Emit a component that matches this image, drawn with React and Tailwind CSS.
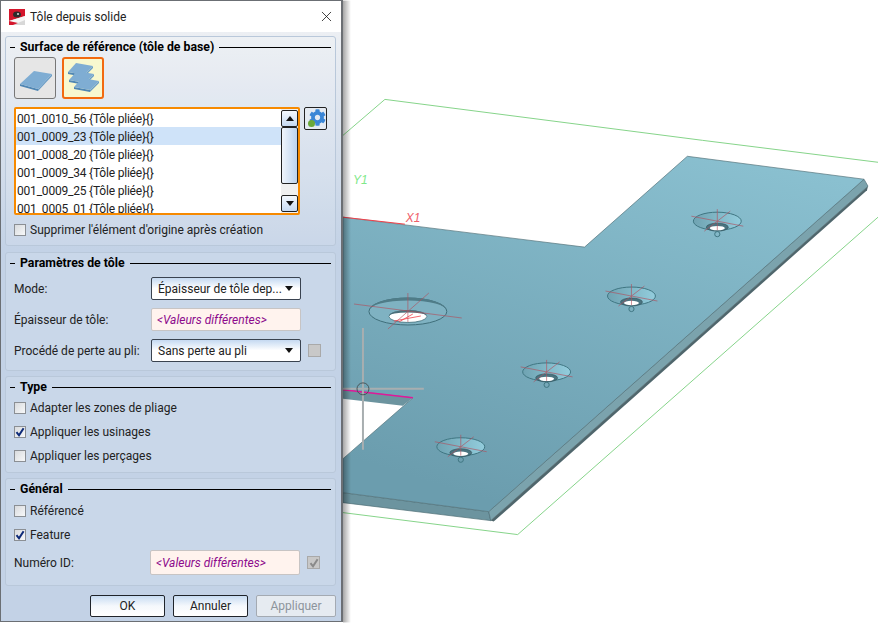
import { X } from "lucide-react";
import { FaCog } from "react-icons/fa";

const font = { fontFamily: 'Roboto, "Open Sans", sans-serif' };

const rows = [
  "001_0010_56 {Tôle pliée}{}",
  "001_0009_23 {Tôle pliée}{}",
  "001_0008_20 {Tôle pliée}{}",
  "001_0009_34 {Tôle pliée}{}",
  "001_0009_25 {Tôle pliée}{}",
  "001_0005_01 {Tôle pliée}{}",
];

const Section = ({ title, className, children }) => (
  <div className={`ml-[4px] mr-[5px] rounded-[3px] border border-[#b9c8da] bg-white/10 px-[8px] ${className}`}>
    <div className="flex items-center gap-[5px] h-[20px] -mx-[4px]">
      <div className="w-[5px] h-px bg-black" />
      <span className="font-bold text-[12.3px] leading-none text-black">{title}</span>
      <div className="flex-1 h-px bg-black" />
    </div>
    {children}
  </div>
);

const Check = ({ on, label, className = "" }) => (
  <div className={`flex items-center gap-[4px] h-[14px] ${className}`}>
    <div className="w-[12px] h-[12px] border border-[#8b8f94] bg-gradient-to-br from-[#d9dbde] to-[#f7f8f9] flex items-center justify-center">
      {on && (
        <svg width="10" height="10" viewBox="0 0 10 10">
          <path d="M1.5 5.2 L4 8.3 L8.6 1.2" fill="none" stroke="#0d2a78" strokeWidth="2" />
        </svg>
      )}
    </div>
    <span className="text-[12px] text-[#222] leading-none">{label}</span>
  </div>
);

const Select = ({ value }) => (
  <div className="w-[150px] h-[23px] shrink-0 rounded-[2px] border border-[#3a4350] bg-gradient-to-b from-[#c5d9f1] via-white to-white flex items-center pl-[6px] pr-[7px] justify-between">
    <span className="text-[12px] text-[#222] leading-none whitespace-nowrap">{value}</span>
    <svg width="8" height="5" viewBox="0 0 8 5"><path d="M0 0 H8 L4 5 Z" fill="#111" /></svg>
  </div>
);

const Diff = ({ className = "h-[23px]" }) => (
  <div className={`w-[150px] shrink-0 rounded-[2px] border border-[#c7c4c4] bg-[#fff3ee] flex items-center pl-[5px] ${className}`}>
    <span className="italic text-[12px] leading-none text-[#8c0a8c]">&lt;Valeurs différentes&gt;</span>
  </div>
);

const PlateShape = ({ dx = 0, dy = 0 }) => (
  <g transform={`translate(${dx} ${dy})`}>
    <path d="M5 16 L21 19 L21 21 L5 18 Z" fill="#4f86b3" />
    <path d="M21 19 L30 10 L30 12 L21 21 Z" fill="#6a9dc6" />
    <path d="M13 7 L30 10 L21 19 L5 16 Z" fill="#7fadd3" />
  </g>
);

const ScrollBtn = ({ up }) => (
  <div className="h-[17px] rounded-[2px] border border-[#222] bg-gradient-to-b from-[#f4f8fd] to-[#c6daf2] flex items-center justify-center">
    <svg width="8" height="5" viewBox="0 0 8 5">
      <path d={up ? "M0 5 H8 L4 0 Z" : "M0 0 H8 L4 5 Z"} fill="#111" />
    </svg>
  </div>
);

const Btn = ({ label, disabled, w }) => (
  <div
    className={`h-[22px] rounded-[2px] border flex items-center justify-center text-[12px] ${w} ${
      disabled
        ? "border-[#a4aab2] text-[#8d949c] bg-[#e6ebf1]"
        : "border-[#20242a] text-[#222] bg-gradient-to-b from-[#c8dcf2] via-[#f5f8fc] to-white"
    }`}
  >
    {label}
  </div>
);

const Hole = ({ cx, cy }) => {
  const rx = 24;
  const ry = 9;
  return (
    <g>
      <ellipse cx={cx} cy={cy} rx={rx} ry={ry} fill="url(#dish)" stroke="#3f7582" strokeWidth="1" />
      <ellipse cx={cx} cy={cy + 6} rx={11} ry={4} fill="#4a7480" stroke="#2f4f58" strokeWidth="0.6" />
      <ellipse cx={cx} cy={cy + 7} rx={7.5} ry={2.2} fill="#fff" />
      <g stroke="#b0505e" strokeWidth="0.8" opacity="0.8">
        <line x1={cx - 26} y1={cy - 5} x2={cx + 26} y2={cy + 5} />
        <line x1={cx} y1={cy - 12} x2={cx} y2={cy + 9} />
        <line x1={cx - 13} y1={cy + 10} x2={cx + 13} y2={cy - 10} />
      </g>
      <circle cx={cx} cy={cy + 13} r="2.6" fill="none" stroke="#3f7582" strokeWidth="1" />
    </g>
  );
};

const Scene = () => (
  <svg className="flex-1 h-[623px] bg-white" viewBox="342 0 536 623">
    <defs>
      <linearGradient id="top" x1="0.8" y1="0" x2="0.35" y2="1">
        <stop offset="0" stopColor="#8ac0d0" />
        <stop offset="1" stopColor="#6b9dae" />
      </linearGradient>
      <linearGradient id="dish" x1="0" y1="0" x2="1" y2="0">
        <stop offset="0" stopColor="#6fa3b2" />
        <stop offset="1" stopColor="#93cddd" />
      </linearGradient>
      <linearGradient id="shadow" x1="0" y1="0" x2="1" y2="0">
        <stop offset="0" stopColor="#000" stopOpacity="0.35" />
        <stop offset="1" stopColor="#000" stopOpacity="0" />
      </linearGradient>
    </defs>
    <path d="M342 135 L384 99 L702 140 L878 162" fill="none" stroke="#86d48a" strokeWidth="1" />
    <path d="M878 217 L517 535 L342 513" fill="none" stroke="#86d48a" strokeWidth="1" />
    <path d="M490 521 L488 512 L342 493 L342 503 Z" fill="#6c949f" stroke="#4c6d75" strokeWidth="0.7" />
    <path d="M488 512 L864 179 L868 186 L490 521 Z" fill="#7ba3ad" stroke="#4f6f77" strokeWidth="0.7" />
    <path d="M490 521 L868 186 L867 190 L493 522 Z" fill="#4f666c" />
    <path
      d="M342 217 L584 247 L687 156 L864 179 L488 512 L342 493 L342 459 L412 398 L342 390 Z"
      fill="url(#top)"
      stroke="#56747c"
      strokeWidth="0.7"
    />
    <path d="M342 390 L412 398 L402 406 L342 399 Z" fill="#6c949f" />
    <path d="M342 390 L412 398" stroke="#e0189a" strokeWidth="1.5" />
    <path d="M342 217 L404 224" stroke="#f0404a" strokeWidth="1" />

    {/* grand trou */}
    <ellipse cx="407" cy="311.5" rx="39" ry="13.5" fill="#7fb2c2" stroke="#3f6e7a" strokeWidth="1" />
    <path d="M368 311 A39 13.5 0 0 1 446 311 A39 10.5 0 0 0 368 311 Z" fill="#4f7c88" />
    <ellipse cx="407" cy="316.5" rx="19" ry="6" fill="#fff" stroke="#3f6e7a" strokeWidth="0.8" />
    <path d="M388 316 A19 6 0 0 1 426 316 A19 3.5 0 0 0 388 316 Z" fill="#4a6f7a" />
    <g stroke="#b0505e" strokeWidth="0.8" opacity="0.8">
      <line x1="353" y1="304" x2="461" y2="318" />
      <line x1="407" y1="293" x2="407" y2="322" />
      <line x1="387" y1="329" x2="428" y2="293" />
    </g>
    <path d="M393 321 L420 316 M398 322 L412 314" stroke="#f0404a" strokeWidth="0.8" />

    <Hole cx={717} cy={221} />
    <Hole cx={631} cy={296} />
    <Hole cx={546} cy={372} />
    <Hole cx={460} cy={447} />
    <g stroke="#a8aeb0" strokeWidth="2">
      <line x1="362" y1="328" x2="362" y2="450" />
      <line x1="342" y1="389" x2="423" y2="389" />
    </g>
    <circle cx="362" cy="389" r="6" fill="none" stroke="#4a5558" strokeWidth="1" />
    <text x="352" y="184" fontSize="12" fontStyle="italic" fill="#7fe88a" style={{ fontFamily: '"Liberation Sans", sans-serif' }}>Y1</text>
    <text x="405" y="222" fontSize="12" fontStyle="italic" fill="#f0606a" style={{ fontFamily: '"Liberation Sans", sans-serif' }}>X1</text>
    <rect x="342" y="0" width="8" height="623" fill="url(#shadow)" />
  </svg>
);

export default function App() {
  return (
    <div className="flex w-[878px] h-[623px] overflow-hidden bg-white" style={font}>
      <div className="w-[343px] h-[622px] shrink-0 border border-[#6b6f74] border-r-2 bg-gradient-to-b from-[#f2f3f5] via-[#c3d2e6] via-40% to-[#c3d2e6] flex flex-col">
        <div className="h-[31px] shrink-0 bg-white flex items-center pl-[8px] pr-[6px] gap-[5px]">
          <svg width="16" height="16" viewBox="0 0 16 16">
            <rect width="16" height="16" fill="#d8d8d8" />
            <path d="M0 0 H16 V7 L0 12 Z" fill="#d4162c" />
            <path d="M0 12 L16 7 V11 L4 16 H0 Z" fill="#f6f6f6" />
            <path d="M0 12 V16 H4 L9 14 Z" fill="#d4162c" />
            <ellipse cx="8" cy="5.5" rx="4" ry="3" fill="#2c2c2c" />
            <circle cx="9" cy="5" r="1" fill="#ddd" />
          </svg>
          <span className="flex-1 text-[12px] text-[#222]">Tôle depuis solide</span>
          <X size={17} strokeWidth={1.1} color="#111" />
        </div>

        <Section title="Surface de référence (tôle de base)" className="mt-[4px] h-[210px]">
          <div className="flex gap-[6px]">
            <div className="w-[42px] h-[42px] rounded-[3px] border border-[#777] bg-[#e6e6e6]">
              <svg width="40" height="40" viewBox="0 0 40 40">
                <path d="M5 26 L23 31 L23 33 L5 28 Z" fill="#4f86b3" />
                <path d="M23 31 L37 16 L37 18 L23 33 Z" fill="#6a9dc6" />
                <path d="M19 13 L37 16 L23 31 L5 26 Z" fill="#7fadd3" />
              </svg>
            </div>
            <div className="w-[42px] h-[42px] rounded-[3px] border-2 border-[#f26a10] bg-[#f8f8cf]">
              <svg width="38" height="38" viewBox="0 0 38 38">
                <PlateShape dx={-1} dy={-3} />
                <PlateShape dx={0} dy={5} />
                <PlateShape dx={5} dy={12} />
              </svg>
            </div>
          </div>
          <div className="flex gap-[4px] mt-[8px]">
            <div className="w-[288px] h-[108px] rounded-[2px] border-2 border-[#f78a00] bg-white flex overflow-hidden">
              <div className="flex-1 overflow-hidden">
                {rows.map((r, i) => (
                  <div
                    key={r}
                    className={`h-[18px] shrink-0 pl-[1px] pt-[2px] flex items-center text-[12px] tracking-[-0.2px] text-[#222] whitespace-nowrap ${i === 1 ? "bg-[#cfe3f9]" : ""}`}
                  >
                    {r}
                  </div>
                ))}
              </div>
              <div className="w-[17px] bg-[#f0f0f0] flex flex-col justify-between py-[1px]">
                <div>
                  <ScrollBtn up />
                  <div className="h-[57px] rounded-[2px] border border-[#222] bg-gradient-to-r from-[#f0f5fb] to-[#bcd3ee]" />
                </div>
                <ScrollBtn />
              </div>
            </div>
            <div className="relative w-[23px] h-[23px] rounded-[2px] border border-[#222] bg-[#e4eaf2] flex items-center justify-center">
              <FaCog size={17} color="#3a86d6" className="ml-[3px] -mt-[2px]" />
              <div className="absolute left-[3px] bottom-[2px] w-[7px] h-[7px] rounded-full bg-[#6aa83a]" />
            </div>
          </div>
          <Check label="Supprimer l'élément d'origine après création" className="mt-[8px]" />
        </Section>

        <Section title="Paramètres de tôle" className="mt-[6px] h-[119px]">
          <div className="flex flex-col gap-[8px] mt-[4px]">
            <div className="flex items-center justify-between text-[12px] text-[#222] pr-[26px]">
              <span>Mode:</span>
              <Select value="Épaisseur de tôle dep..." />
            </div>
            <div className="flex items-center justify-between text-[12px] text-[#222] pr-[26px]">
              <span>Épaisseur de tôle:</span>
              <Diff />
            </div>
            <div className="flex items-center justify-between text-[12px] text-[#222]">
              <span>Procédé de perte au pli:</span>
              <div className="flex items-center gap-[7px] pr-[6px]">
                <Select value="Sans perte au pli" />
                <div className="w-[13px] h-[13px] border border-[#a9a9a9] bg-[#c8c8c8]" />
              </div>
            </div>
          </div>
        </Section>

        <Section title="Type" className="mt-[5px] h-[97px]">
          <div className="flex flex-col gap-[10px] mt-[4px]">
            <Check label="Adapter les zones de pliage" />
            <Check on label="Appliquer les usinages" />
            <Check label="Appliquer les perçages" />
          </div>
        </Section>

        <Section title="Général" className="mt-[5px] h-[108px]">
          <div className="flex flex-col gap-[10px] mt-[5px]">
            <Check label="Référencé" />
            <Check on label="Feature" />
          </div>
          <div className="flex items-center justify-between text-[12px] text-[#222] mt-[8px] pr-[7px]">
            <span>Numéro ID:</span>
            <div className="flex items-center gap-[7px]">
              <Diff className="h-[25px]" />
              <div className="w-[13px] h-[13px] border border-[#a9a9a9] bg-[#c8c8c8] flex items-center justify-center">
                <svg width="10" height="10" viewBox="0 0 10 10">
                  <path d="M1.5 5.2 L4 8.3 L8.6 1.2" fill="none" stroke="#8a8a8a" strokeWidth="2" />
                </svg>
              </div>
            </div>
          </div>
        </Section>

        <div className="flex justify-end gap-[8px] mt-[9px] pr-[5px]">
          <Btn label="OK" w="w-[75px]" />
          <Btn label="Annuler" w="w-[75px]" />
          <Btn label="Appliquer" disabled w="w-[80px]" />
        </div>
      </div>
      <Scene />
    </div>
  );
}
